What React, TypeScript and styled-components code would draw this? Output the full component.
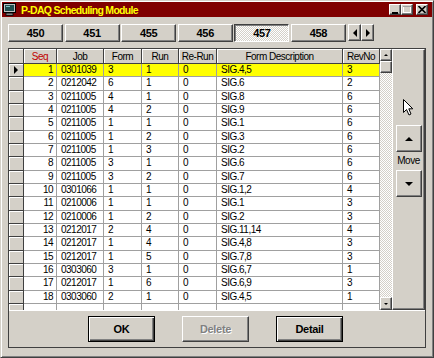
import React from "react";
import styled, { createGlobalStyle, css } from "styled-components";

const GlobalStyle = createGlobalStyle`
  html, body { margin: 0; padding: 0; background: #d4d0c8; }
  body { font-family: "Liberation Sans", Arial, sans-serif; }
`;

const COLS = "15px 33px 47px 38px 37px 38px 126px 37px";
const ROW_H = 13.33;

type Job = [number, string, string, string, string, string, string];

const rows: Job[] = [
  [1, "0301039", "3", "1", "0", "SIG.4,5", "3"],
  [2, "0212042", "6", "1", "0", "SIG.6", "2"],
  [3, "0211005", "4", "1", "0", "SIG.8", "6"],
  [4, "0211005", "4", "2", "0", "SIG.9", "6"],
  [5, "0211005", "1", "1", "0", "SIG.1", "6"],
  [6, "0211005", "1", "2", "0", "SIG.3", "6"],
  [7, "0211005", "1", "3", "0", "SIG.2", "6"],
  [8, "0211005", "3", "1", "0", "SIG.6", "6"],
  [9, "0211005", "3", "2", "0", "SIG.7", "6"],
  [10, "0301066", "1", "1", "0", "SIG.1,2", "4"],
  [11, "0210006", "1", "1", "0", "SIG.1", "3"],
  [12, "0210006", "1", "2", "0", "SIG.2", "3"],
  [13, "0212017", "2", "4", "0", "SIG.11,14", "4"],
  [14, "0212017", "1", "4", "0", "SIG.4,8", "3"],
  [15, "0212017", "1", "5", "0", "SIG.7,8", "3"],
  [16, "0303060", "3", "1", "0", "SIG.6,7", "1"],
  [17, "0212017", "1", "6", "0", "SIG.6,9", "3"],
  [18, "0303060", "2", "1", "0", "SIG.4,5", "1"],
];

const raised = css`
  background: #d4d0c8;
  border: 1px solid;
  border-color: #fff #404040 #404040 #fff;
  box-shadow: inset -1px -1px #808080;
`;

const Window = styled.div`
  position: relative;
  box-sizing: border-box;
  width: 434px;
  height: 358px;
  padding: 1px;
  background: #d4d0c8;
  border: 1px solid;
  border-color: #d4d0c8 #404040 #404040 #d4d0c8;
  box-shadow: inset 1px 1px #fff, inset -1px -1px #808080;
  display: flex;
  flex-direction: column;
`;

const TitleBar = styled.div`
  height: 15px;
  background: #800000;
  display: flex;
  align-items: center;
  padding: 0 4px 0 1px;
`;

const TitleText = styled.span`
  margin-left: 5px;
  color: #ffff00;
  font-size: 10.5px;
  font-weight: bold;
  letter-spacing: -0.7px;
  flex: 1;
`;

const CaptionButton = styled.div<{ $gap?: boolean }>`
  ${raised};
  box-sizing: border-box;
  width: 12px;
  height: 11px;
  margin-left: ${(p) => (p.$gap ? "3px" : "0")};
  display: flex;
  align-items: center;
  justify-content: center;
`;

const TabRow = styled.div`
  display: flex;
  gap: 1.6px;
  margin: 7px 0 0 6px;
  height: 18px;
`;

const TabButton = styled.div<{ $active?: boolean }>`
  ${raised};
  box-sizing: border-box;
  width: 55px;
  height: 18px;
  display: flex;
  align-items: center;
  justify-content: center;
  font-size: 11px;
  font-weight: bold;
  letter-spacing: -0.3px;
  ${(p) =>
    p.$active &&
    css`
      border-color: #404040 #fff #fff #404040;
      box-shadow: inset 1px 1px #808080;
      background: repeating-conic-gradient(#d4d0c8 0 25%, #fff 0 50%) 0 0 / 2px 2px;
    `}
`;

const ArrowButton = styled.div`
  ${raised};
  box-sizing: border-box;
  width: 13px;
  height: 17px;
  display: flex;
  align-items: center;
  justify-content: center;
`;

const ArrowGroup = styled.div`
  display: flex;
  margin-left: 0.5px;
`;

const Frame = styled.div`
  box-sizing: border-box;
  margin: 6px 6px 0 6px;
  height: 300px;
  border: 1px solid #404040;
  display: flex;
  flex-direction: column;
`;

const TopArea = styled.div`
  display: flex;
  height: 261px;
`;

const GridBox = styled.div`
  display: flex;
  width: 383px;
  overflow: hidden;
`;

const Table = styled.div`
  width: 371px;
  overflow: hidden;
  background: #fff;
`;

const Row = styled.div<{ $head?: boolean }>`
  display: grid;
  grid-template-columns: ${COLS};
  height: ${(p) => (p.$head ? "15px" : `${ROW_H}px`)};
`;

const HeadCell = styled.div<{ $red?: boolean }>`
  box-sizing: border-box;
  background: #d4d0c8;
  border-right: 1px solid #404040;
  border-bottom: 1px solid #404040;
  box-shadow: inset 1px 1px #fff;
  color: ${(p) => (p.$red ? "#c00000" : "#000")};
  font-size: 10px;
  letter-spacing: -0.5px;
  display: flex;
  align-items: center;
  justify-content: center;
  white-space: nowrap;
  overflow: hidden;
`;

const Indicator = styled.div`
  box-sizing: border-box;
  background: #d4d0c8;
  border-right: 1px solid #404040;
  border-bottom: 1px solid #404040;
  box-shadow: inset 1px 1px #fff;
  display: flex;
  align-items: center;
  justify-content: center;
`;

const Cell = styled.div<{ $right?: boolean; $sel?: boolean }>`
  box-sizing: border-box;
  background: ${(p) => (p.$sel ? "#ffff00" : "#fff")};
  border-right: 1px solid #a0a0a0;
  border-bottom: 1px solid #a0a0a0;
  font-size: 10px;
  letter-spacing: -0.5px;
  line-height: 12px;
  padding: ${(p) => (p.$right ? "0 3px 0 0" : "0 0 0 4px")};
  text-align: ${(p) => (p.$right ? "right" : "left")};
  white-space: nowrap;
  overflow: hidden;
`;

const ScrollBar = styled.div`
  width: 12px;
  display: flex;
  flex-direction: column;
  background: repeating-conic-gradient(#d4d0c8 0 25%, #fff 0 50%) 0 0 / 2px 2px;
`;

const ScrollPart = styled.div<{ $h: number }>`
  ${raised};
  box-sizing: border-box;
  height: ${(p) => p.$h}px;
  display: flex;
  align-items: center;
  justify-content: center;
`;

const Spacer = styled.div`
  flex: 1;
`;

const SidePanel = styled.div`
  ${raised};
  position: relative;
  box-sizing: border-box;
  flex: 1;
  display: flex;
  flex-direction: column;
  align-items: center;
  padding-top: 75px;
`;

const MoveButton = styled.div`
  ${raised};
  box-sizing: border-box;
  width: 26px;
  height: 27px;
  display: flex;
  align-items: center;
  justify-content: center;
`;

const MoveLabel = styled.div`
  font-size: 10px;
  letter-spacing: -0.5px;
  margin: 4px 0 5px;
  line-height: 9px;
`;

const Cursor = styled.svg`
  position: absolute;
  left: 10px;
  top: 49px;
`;

const BottomBar = styled.div`
  flex: 1;
  border-top: 1px solid #fff;
  display: flex;
  gap: 27px;
  padding: 5px 0 0 79px;
`;

const DialogButton = styled.div<{ $default?: boolean; $disabled?: boolean }>`
  box-sizing: border-box;
  width: 67px;
  height: 26px;
  display: flex;
  align-items: center;
  justify-content: center;
  font-size: 11px;
  font-weight: bold;
  letter-spacing: -0.3px;
  background: #d4d0c8;
  ${(p) =>
    p.$default
      ? css`
          border: 1px solid #000;
          box-shadow: inset 1px 1px #fff, inset -1px -1px #404040, inset -2px -2px #808080;
        `
      : css`
          border: 1px solid;
          border-color: #fff #404040 #404040 #fff;
          box-shadow: inset -1px -1px #808080;
        `}
  color: ${(p) => (p.$disabled ? "#808080" : "#000")};
  text-shadow: ${(p) => (p.$disabled ? "1px 1px #fff" : "none")};
`;

const Tri = ({ dir, size = 3 }: { dir: "up" | "down" | "left" | "right"; size?: number }) => {
  const s = size;
  const pts =
    dir === "up"
      ? `0,${s} ${s * 2},${s} ${s},0`
      : dir === "down"
      ? `0,0 ${s * 2},0 ${s},${s}`
      : dir === "left"
      ? `${s},0 ${s},${s * 2} 0,${s}`
      : `0,0 0,${s * 2} ${s},${s}`;
  const w = dir === "up" || dir === "down" ? s * 2 : s;
  const h = dir === "up" || dir === "down" ? s : s * 2;
  return (
    <svg width={w} height={h} viewBox={`0 0 ${w} ${h}`}>
      <polygon points={pts} fill="#000" />
    </svg>
  );
};

const AppIcon = () => (
  <svg width="13" height="13" viewBox="0 0 13 13">
    <rect x="0.5" y="0.5" width="12" height="9" fill="#c0c0c0" stroke="#000" />
    <rect x="2" y="2" width="9" height="6" fill="#205050" />
    <rect x="3" y="3" width="4" height="1" fill="#80c0c0" />
    <rect x="3" y="10" width="7" height="2.5" fill="#808080" stroke="#000" strokeWidth="0.8" />
  </svg>
);

export default function App() {
  return (
    <>
      <GlobalStyle />
      <Window>
        <TitleBar>
          <AppIcon />
          <TitleText>P-DAQ Scheduling Module</TitleText>
          <CaptionButton>
            <svg width="6" height="8" viewBox="0 0 6 8">
              <rect x="0" y="6" width="6" height="2" fill="#000" />
            </svg>
          </CaptionButton>
          <CaptionButton>
            <svg width="8" height="7" viewBox="0 0 8 7">
              <rect x="0.5" y="0.5" width="7" height="6" fill="none" stroke="#fff" />
              <rect x="0" y="0" width="8" height="1" fill="#a0a0a0" />
            </svg>
          </CaptionButton>
          <CaptionButton $gap>
            <svg width="8" height="7" viewBox="0 0 8 7">
              <path d="M0.5 0 L7.5 7 M7.5 0 L0.5 7" stroke="#000" strokeWidth="1.6" />
            </svg>
          </CaptionButton>
        </TitleBar>

        <TabRow>
          {["450", "451", "455", "456", "457", "458"].map((t) => (
            <TabButton key={t} $active={t === "457"}>
              {t}
            </TabButton>
          ))}
          <ArrowGroup>
            <ArrowButton>
              <Tri dir="left" size={4} />
            </ArrowButton>
            <ArrowButton>
              <Tri dir="right" size={4} />
            </ArrowButton>
          </ArrowGroup>
        </TabRow>

        <Frame>
          <TopArea>
            <GridBox>
              <Table>
                <Row $head>
                  <HeadCell />
                  <HeadCell $red>Seq</HeadCell>
                  <HeadCell>Job</HeadCell>
                  <HeadCell>Form</HeadCell>
                  <HeadCell>Run</HeadCell>
                  <HeadCell>Re-Run</HeadCell>
                  <HeadCell>Form Description</HeadCell>
                  <HeadCell>RevNo</HeadCell>
                </Row>
                {rows.map((r, i) => {
                  const sel = i === 0;
                  return (
                    <Row key={r[0]}>
                      <Indicator>{sel && <Tri dir="right" size={4} />}</Indicator>
                      <Cell $right $sel={sel}>
                        {r[0]}
                      </Cell>
                      {r.slice(1).map((v, j) => (
                        <Cell key={j} $sel={sel}>
                          {v}
                        </Cell>
                      ))}
                    </Row>
                  );
                })}
                <Row>
                  <Indicator />
                  {Array.from({ length: 7 }).map((_, j) => (
                    <Cell key={j} />
                  ))}
                </Row>
              </Table>
              <ScrollBar>
                <ScrollPart $h={12}>
                  <Tri dir="up" size={2} />
                </ScrollPart>
                <ScrollPart $h={12} />
                <Spacer />
                <ScrollPart $h={13}>
                  <Tri dir="down" size={2} />
                </ScrollPart>
              </ScrollBar>
            </GridBox>
            <SidePanel>
              <Cursor width="11" height="17" viewBox="0 0 11 17">
                <path
                  d="M0.5 0.5 L0.5 13.5 L3.5 10.5 L6 16 L8 15 L5.8 9.8 L9.8 9.8 Z"
                  fill="#fff"
                  stroke="#000"
                  strokeWidth="1"
                />
              </Cursor>
              <MoveButton>
                <Tri dir="up" size={4} />
              </MoveButton>
              <MoveLabel>Move</MoveLabel>
              <MoveButton>
                <Tri dir="down" size={4} />
              </MoveButton>
            </SidePanel>
          </TopArea>
          <BottomBar>
            <DialogButton $default>OK</DialogButton>
            <DialogButton $disabled>Delete</DialogButton>
            <DialogButton $default>Detail</DialogButton>
          </BottomBar>
        </Frame>
      </Window>
    </>
  );
}
